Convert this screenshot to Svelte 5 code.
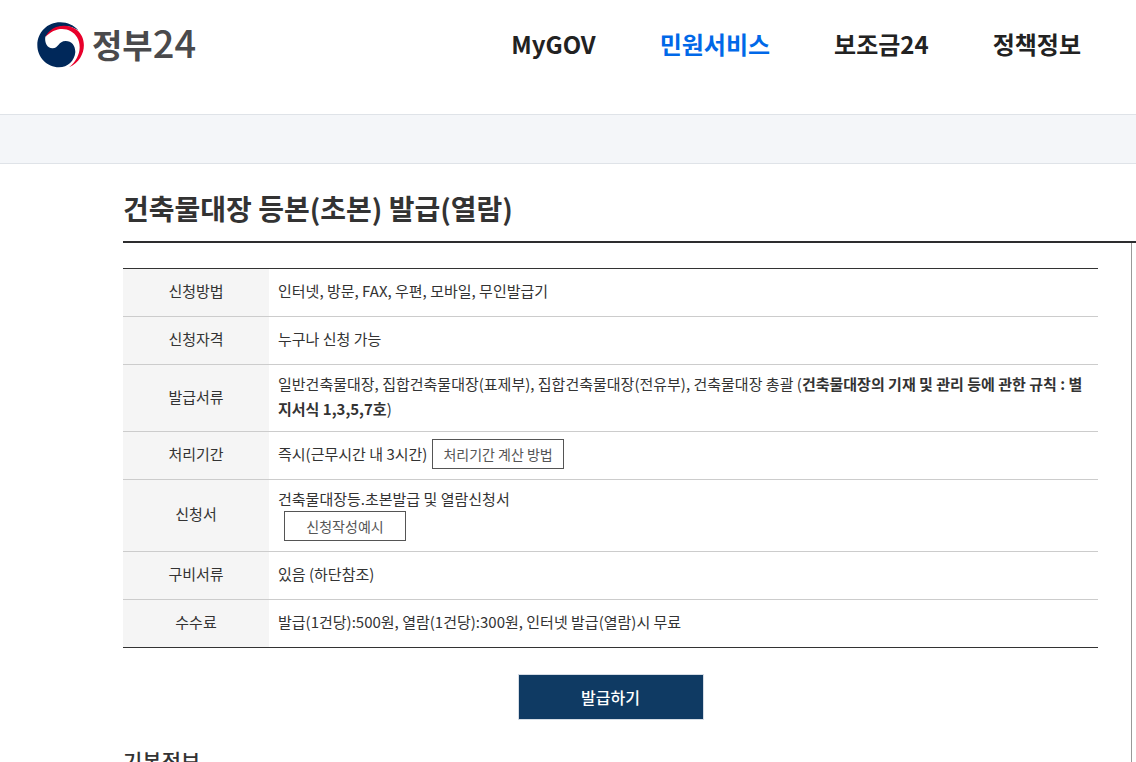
<script>
    const menus = [
        { label: "MyGOV", active: false },
        { label: "민원서비스", active: true },
        { label: "보조금24", active: false },
        { label: "정책정보", active: false },
    ];
</script>

<div class="page">
    <header>
        <a class="logo" href="#home">
            <svg width="47" height="46" viewBox="0 0 141 138" aria-hidden="true">
                <path
                    fill="#00285a"
                    d="M1 70C1 31 31 1 70 1C92 1 111 10 124 25C97 6 54 6 25 44C22 62 31 78 46 79C64 80 64 57 86 57C104 57 115 71 115 90C113 116 92 136 66 136C30 136 1 106 1 70Z"
                />
                <path
                    fill="#e8002b"
                    d="M25 46C42 7 92 3 120 24C154 52 146 114 96 136C126 112 137 75 120 46C103 15 55 10 25 46Z"
                />
            </svg>
            <span class="logo-text">정부<span class="logo-number">24</span></span>
        </a>
        <nav>
            {#each menus as menu}
                <a href="#menu" class:active={menu.active}>{menu.label}</a>
            {/each}
        </nav>
    </header>

    <div class="location"></div>

    <main>
        <h1>건축물대장 등본(초본) 발급(열람)</h1>
        <div class="columns">
            <div class="content">
                <table>
                    <tbody>
                        <tr>
                            <th scope="row">신청방법</th>
                            <td>인터넷, 방문, FAX, 우편, 모바일, 무인발급기</td>
                        </tr>
                        <tr>
                            <th scope="row">신청자격</th>
                            <td>누구나 신청 가능</td>
                        </tr>
                        <tr>
                            <th scope="row">발급서류</th>
                            <td>
                                일반건축물대장, 집합건축물대장(표제부), 집합건축물대장(전유부), 건축물대장 총괄
                                (<b>건축물대장의 기재 및 관리 등에 관한 규칙 : 별지서식 1,3,5,7호</b>)
                            </td>
                        </tr>
                        <tr>
                            <th scope="row">처리기간</th>
                            <td>
                                <div class="period">
                                    <span>즉시(근무시간 내 3시간)</span>
                                    <button class="small">처리기간 계산 방법</button>
                                </div>
                            </td>
                        </tr>
                        <tr>
                            <th scope="row">신청서</th>
                            <td>
                                건축물대장등.초본발급 및 열람신청서
                                <button class="small example">신청작성예시</button>
                            </td>
                        </tr>
                        <tr>
                            <th scope="row">구비서류</th>
                            <td>있음 (하단참조)</td>
                        </tr>
                        <tr>
                            <th scope="row">수수료</th>
                            <td>발급(1건당):500원, 열람(1건당):300원, 인터넷 발급(열람)시 무료</td>
                        </tr>
                    </tbody>
                </table>
                <button class="issue">발급하기</button>
                <h2>기본정보</h2>
            </div>
            <aside></aside>
        </div>
    </main>
</div>

<style>
    :global(body) {
        margin: 0;
    }

    .page {
        height: 100vh;
        overflow: hidden;
        display: flex;
        flex-direction: column;
        background: #fff;
        color: #333;
        font-family: "Noto Sans CJK KR", sans-serif;
        font-size: 15px;
        line-height: 25px;
    }

    header {
        flex: none;
        height: 114px;
        padding: 0 55px 0 37px;
        box-sizing: border-box;
        display: flex;
        justify-content: space-between;
        align-items: flex-start;
    }

    a {
        color: #222;
        text-decoration: none;
    }

    .logo {
        display: flex;
        align-items: center;
        gap: 8px;
        height: 90px;
    }

    .logo-text {
        color: #4a4a4c;
        font-size: 33px;
        font-weight: 700;
        line-height: 40px;
        padding-bottom: 4px;
    }

    .logo-number {
        font-size: 38px;
        font-weight: 500;
    }

    nav {
        display: flex;
        gap: 64px;
        height: 86px;
        align-items: center;
        font-size: 24px;
        font-weight: 700;
    }

    nav .active {
        color: #0068e8;
    }

    .location {
        flex: none;
        height: 48px;
        background: #f4f6f9;
        border-top: 1px solid #dfe3e8;
        border-bottom: 1px solid #dfe3e8;
    }

    main {
        flex: 1;
        min-height: 0;
        padding-left: 123px;
        display: flex;
        flex-direction: column;
    }

    h1 {
        flex: none;
        margin: 0;
        padding: 24px 0 12px;
        border-bottom: 2px solid #2d2d2f;
        font-size: 28px;
        line-height: 41px;
    }

    .columns {
        flex: 1;
        min-height: 0;
        display: flex;
    }

    .content {
        flex: 1;
        padding: 25px 33px 0 0;
    }

    aside {
        width: 4px;
        border-left: 1px solid #999;
    }

    table {
        width: 100%;
        border-collapse: collapse;
        border-top: 1px solid #333;
        border-bottom: 1px solid #333;
    }

    th,
    td {
        height: 48px;
        padding: 6px 9px 10px;
        box-sizing: border-box;
        border-bottom: 1px solid #ccc;
    }

    tr:last-child > * {
        border-bottom-color: #333;
    }

    th {
        width: 146px;
        background: #f5f5f5;
        font-weight: 400;
    }

    .period {
        display: flex;
        align-items: center;
        gap: 5px;
    }

    button {
        font-family: inherit;
        cursor: pointer;
    }

    .small {
        height: 30px;
        padding: 0 10px;
        border: 1px solid #555;
        background: #fff;
        color: #555;
        font-size: 14px;
        line-height: 24px;
    }

    .example {
        display: block;
        width: 122px;
        margin-left: 6px;
    }

    .issue {
        display: block;
        width: 186px;
        height: 46px;
        margin: 26px auto 0;
        border: 1px solid #d5dce5;
        background: #0f3a63;
        color: #fff;
        font-size: 16px;
        font-weight: 500;
    }

    h2 {
        margin: 24px 0 0;
        font-size: 21px;
        font-weight: 500;
        line-height: 32px;
    }
</style>
